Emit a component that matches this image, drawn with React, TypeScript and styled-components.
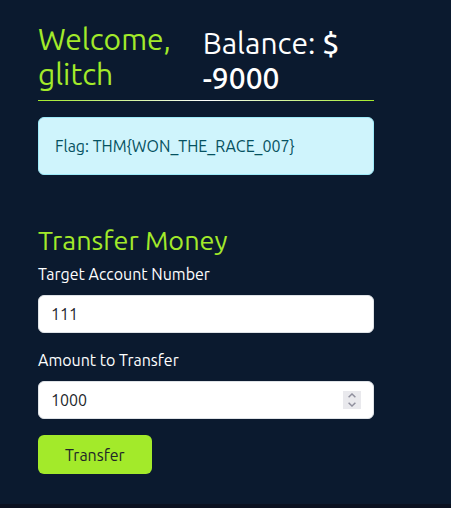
import React from "react";
import styled, { createGlobalStyle } from "styled-components";

const GlobalStyle = createGlobalStyle`
  *, *::before, *::after { box-sizing: border-box; }
  body {
    margin: 0;
    background: #0b1120;
    color: #ffffff;
    font-family: Ubuntu, "Noto Sans", sans-serif;
    font-size: 16px;
    line-height: 24px;
  }
`;

const Page = styled.main`
  padding: 22px 77px 30px 38px;
  background: #0b1a2f;
`;

const Header = styled.header`
  display: grid;
  grid-template-columns: 49fr 51fr;
  padding-bottom: 4px;
`;

const Heading = styled.h1<{ $accent?: boolean }>`
  margin: 0;
  color: ${(p) => (p.$accent ? "#a3ea2a" : "#ffffff")};
  font-size: 30px;
  font-weight: 400;
  line-height: 35px;
`;

const Balance = styled(Heading)`
  padding-top: 4px;
`;

const Amount = styled.span`
  font-weight: 500;
`;

const Divider = styled.hr`
  height: 1px;
  margin: 0 0 16px;
  border: 0;
  background: linear-gradient(90deg, #a3ea2a, #ffffff, #a3ea2a);
`;

const Alert = styled.div`
  margin-bottom: 50px;
  padding: 16px;
  border: 1px solid #9eeaf9;
  border-radius: 6px;
  background: #cff4fc;
  color: #055160;
`;

const Form = styled.form`
  display: flex;
  flex-direction: column;
  align-items: flex-start;
`;

const Title = styled.h2`
  margin: 0 0 7px;
  color: #a3ea2a;
  font-size: 27px;
  font-weight: 400;
  line-height: 30px;
`;

const Label = styled.label`
  margin-bottom: 9px;
`;

const Field = styled.div`
  display: flex;
  align-items: center;
  width: 100%;
  height: 38px;
  margin-bottom: 15px;
  padding: 0 12px;
  border: 1px solid #dee2e6;
  border-radius: 6px;
  background: #ffffff;
`;

const Input = styled.input`
  flex: 1;
  min-width: 0;
  padding: 0;
  border: 0;
  outline: 0;
  background: transparent;
  color: #212529;
  font: inherit;
  appearance: textfield;

  &::-webkit-inner-spin-button { appearance: none; margin: 0; }
`;

const Stepper = styled.div`
  display: flex;
  flex-direction: column;
  width: 18px;
  height: 18px;
  background: #e9e9ed;
`;

const Step = styled.button`
  display: flex;
  justify-content: center;
  align-items: center;
  height: 9px;
  padding: 0;
  border: 0;
  background: transparent;
  color: #8f8f9d;
`;

const Submit = styled.button`
  height: 39px;
  margin-top: 1px;
  padding: 0 27px;
  border: 0;
  border-radius: 6px;
  background: #a3ea2a;
  color: #212529;
  font: inherit;
`;

const Chevron = ({ d }: { d: string }) => (
  <svg width="8" height="5" viewBox="0 0 8 5" fill="none" stroke="currentColor" strokeWidth="1.5" aria-hidden="true">
    <path d={d} />
  </svg>
);

export default function App() {
  const amount = React.useRef<HTMLInputElement>(null);

  return (
    <>
      <GlobalStyle />
      <Page>
        <Header>
          <Heading $accent>Welcome, glitch</Heading>
          <Balance as="h2">
            Balance: <Amount>$ -9000</Amount>
          </Balance>
        </Header>
        <Divider />
        <Alert role="alert">Flag: THM&#123;WON_THE_RACE_007&#125;</Alert>
        <Form onSubmit={(e) => e.preventDefault()}>
          <Title>Transfer Money</Title>
          <Label htmlFor="account">Target Account Number</Label>
          <Field>
            <Input id="account" type="text" defaultValue="111" />
          </Field>
          <Label htmlFor="amount">Amount to Transfer</Label>
          <Field>
            <Input id="amount" ref={amount} type="number" defaultValue="1000" />
            <Stepper>
              <Step type="button" aria-label="Increase amount" onClick={() => amount.current?.stepUp()}>
                <Chevron d="M0.6 4.2 L4 1 L7.4 4.2" />
              </Step>
              <Step type="button" aria-label="Decrease amount" onClick={() => amount.current?.stepDown()}>
                <Chevron d="M0.6 0.8 L4 4 L7.4 0.8" />
              </Step>
            </Stepper>
          </Field>
          <Submit type="submit">Transfer</Submit>
        </Form>
      </Page>
    </>
  );
}
